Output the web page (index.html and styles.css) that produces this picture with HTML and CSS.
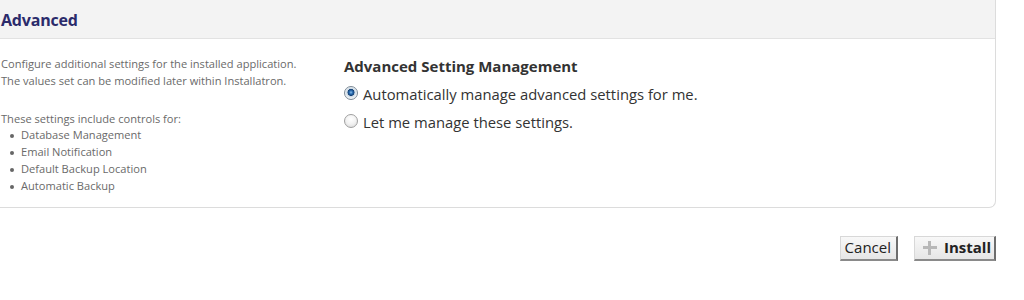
FILE: index.html
```html
<!DOCTYPE html>
<html>
<head>
<meta charset="utf-8">
<link rel="stylesheet" href="styles.css">
</head>
<body>
<div class="panel">
  <div class="panel-head"><h2 class="title">Advanced</h2></div>
  <div class="panel-body">
    <div class="info">
      <p class="info-p">Configure additional settings for the installed application.<br>The values set can be modified later within Installatron.</p>
      <p class="info-p">These settings include controls for:</p>
      <ul class="info-list">
        <li>Database Management</li>
        <li>Email Notification</li>
        <li>Default Backup Location</li>
        <li>Automatic Backup</li>
      </ul>
    </div>
    <div class="options">
      <h3 class="opt-title">Advanced Setting Management</h3>
      <label class="opt"><span class="radio checked"></span>Automatically manage advanced settings for me.</label>
      <label class="opt"><span class="radio"></span>Let me manage these settings.</label>
    </div>
  </div>
</div>
<div class="actions">
  <button class="btn">Cancel</button>
  <button class="btn btn-primary"><span class="plus"></span>Install</button>
</div>
</body>
</html>
```

FILE: styles.css
```css
html, body {
  margin: 0;
  padding: 0;
  background: #fff;
}
body {
  font-family: "Open Sans", "Noto Sans", sans-serif;
  color: #333;
  overflow: hidden;
}
.panel {
  margin-left: -12px;
  width: 1006px;
  border: 1px solid #dcdcdc;
  border-top: none;
  border-radius: 0 0 7px 7px;
  background: #fff;
}
.panel-head {
  height: 38px;
  background: #f3f3f3;
  border-bottom: 1px solid #e2e2e2;
  display: flex;
  align-items: center;
  padding-left: 12px;
}
.title {
  margin: 0;
  font-size: 16px;
  font-weight: 700;
  color: #2b2b6b;
  letter-spacing: -0.2px;
  position: relative;
  top: 1px;
}
.panel-body {
  display: grid;
  grid-template-columns: 343px 1fr;
  padding: 17px 0 12px 12px;
}
.info {
  font-size: 11.1px;
  color: #6a6a6a;
  line-height: 16.8px;
}
.info-p {
  margin: 0 0 21px;
}
.info-p + .info-p {
  margin: 0;
}
.info-list {
  margin: 0;
  padding-left: 20px;
  list-style: none;
}
.info-list li {
  position: relative;
}
.info-list li::before {
  content: "";
  position: absolute;
  left: -11px;
  top: 7px;
  width: 4px;
  height: 4px;
  border-radius: 50%;
  background: #666;
}
.options {
  display: flex;
  flex-direction: column;
}
.opt-title {
  margin: -1px 0 3px;
  font-size: 15px;
  font-weight: 700;
  color: #333;
  line-height: 22px;
}
.opt {
  display: flex;
  align-items: center;
  font-size: 14.8px;
  line-height: 28px;
  color: #333;
}
.radio {
  width: 14px;
  height: 14px;
  border-radius: 50%;
  box-sizing: border-box;
  border: 1px solid #a0a0a0;
  background: radial-gradient(circle at 50% 35%, #fff 0%, #f2f2f2 50%, #d4d4d4 100%);
  margin-right: 5px;
  position: relative;
  top: -1px;
}
.radio.checked {
  border-color: #7d8a96;
  background: radial-gradient(circle at 50% 45%, #8fc0ea 0%, #2c6fb4 18%, #123f74 36%, #c8d6e2 42%, #f3f6f8 68%, #c9d2da 100%);
}
.actions {
  display: flex;
  justify-content: flex-end;
  gap: 16px;
  padding: 28px 28px 0 0;
}
.btn {
  font-family: "Open Sans", "Noto Sans", sans-serif;
  font-size: 15px;
  color: #222;
  height: 25px;
  padding: 0 5px 0 4px;
  border: 1px solid #d8d8d8;
  border-right: 2px solid #6d6d6d;
  border-bottom: 2px solid #8a8a8a;
  background: linear-gradient(#f8f8f8, #e6e6e6);
  display: flex;
  align-items: center;
  line-height: 1;
}
.btn-primary {
  font-weight: 700;
  padding: 0 3px 0 8px;
}
.plus {
  width: 14px;
  height: 14px;
  margin-right: 7px;
  background:
    linear-gradient(#b8b8b8, #b8b8b8) center / 14px 3px no-repeat,
    linear-gradient(#b8b8b8, #b8b8b8) center / 3px 14px no-repeat;
}
```
